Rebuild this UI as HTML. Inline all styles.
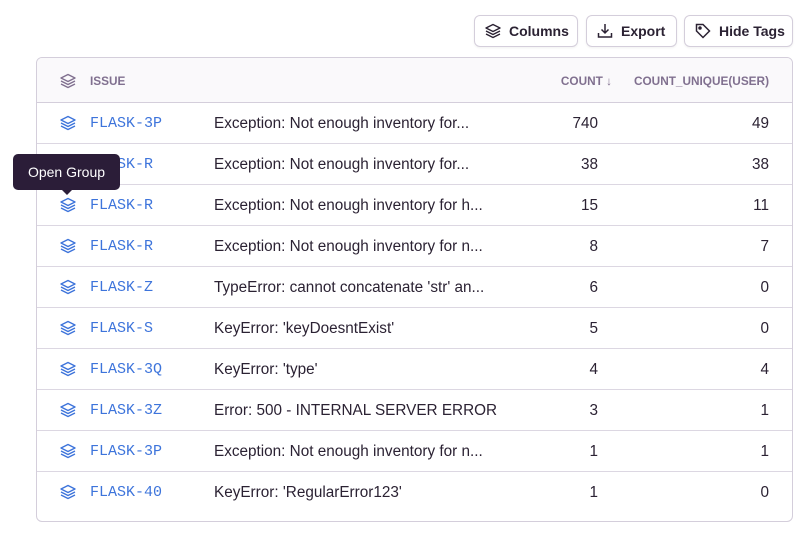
<!DOCTYPE html>
<html><head><style>
*{box-sizing:border-box;margin:0;padding:0}
body{width:807px;height:538px;background:#fff;font-family:"Liberation Sans",sans-serif;color:#2b2233;position:relative;overflow:hidden}
.btn{position:absolute;top:15px;height:32px;border:1px solid #d4cedb;border-radius:6px;font-size:14px;font-weight:bold;color:#2b2233;display:flex;align-items:center;padding-left:10px;box-shadow:0 1px 2px rgba(0,0,0,.06)}
.btn svg{margin-right:8px}
.tbl{position:absolute;left:36px;top:57px;width:757px;height:465px;border:1px solid #d4cedb;border-radius:6px;overflow:hidden}
.hd{height:45px;background:#faf9fb;border-bottom:1px solid #d4cedb;position:relative;font-size:11.8px;font-weight:bold;color:#80708f}
.row{height:41px;border-bottom:1px solid #dcd7e2;position:relative;font-size:15.3px}
.row:last-child{border-bottom:none;height:50px}
.a{position:absolute}
.id{left:53px;top:12px;font-family:"Liberation Mono",monospace;color:#3d74db;font-size:15px}
.t{left:177px;top:12px}
.c{right:194px;top:12px}
.u{right:23px;top:12px}
.ic{left:23px;top:12px}
.tip{position:absolute;left:13px;top:154px;width:107px;height:36px;background:#2b1d38;border-radius:5px;color:#fff;font-size:14px;text-align:center;line-height:36px}
.tip:after{content:"";position:absolute;left:49px;bottom:-5px;border:5px solid transparent;border-top-color:#2b1d38;border-bottom:0}
</style></head><body>
<svg width="0" height="0" style="position:absolute"><defs><g id="st" fill="none" stroke-width="1.4" stroke-linejoin="round"><path d="M8 1.5 L15 5 L8 8.5 L1 5Z"/><path d="M1 8 L8 11.5 L15 8"/><path d="M1 11 L8 14.5 L15 11"/></g></defs></svg>
<div class="btn" style="left:474px;width:104px"><svg width="16" height="16" stroke="#2b2233"><use href="#st"/></svg>Columns</div>
<div class="btn" style="left:586px;width:91px"><svg width="16" height="16" fill="none" stroke="#2b2233" stroke-width="1.5"><path d="M8 1v9M4.5 6.5L8 10l3.5-3.5M1.5 10v4h13v-4"/></svg>Export</div>
<div class="btn" style="left:684px;width:109px"><svg width="16" height="16" fill="none" stroke="#2b2233" stroke-width="1.5"><path d="M1.5 1.5h6.5l6.5 6.5-6.5 6.5-6.5-6.5z"/><circle cx="5" cy="5" r="1" fill="#2b2233"/></svg>Hide Tags</div>
<div class="tbl">
<div class="hd"><svg class="a" style="left:23px;top:15px" width="16" height="16" stroke="#80708f"><use href="#st"/></svg><span class="a" style="left:53px;top:16px">ISSUE</span><span class="a" style="right:180px;top:16px">COUNT ↓</span><span class="a" style="right:23px;top:16px">COUNT_UNIQUE(USER)</span></div>
<div class="row"><svg class="a ic" width="16" height="16" stroke="#3d74db"><use href="#st"/></svg><span class="a id">FLASK-3P</span><span class="a t">Exception: Not enough inventory for...</span><span class="a c">740</span><span class="a u">49</span></div>
<div class="row"><svg class="a ic" width="16" height="16" stroke="#3d74db"><use href="#st"/></svg><span class="a id">FLASK-R</span><span class="a t">Exception: Not enough inventory for...</span><span class="a c">38</span><span class="a u">38</span></div>
<div class="row"><svg class="a ic" width="16" height="16" stroke="#3d74db"><use href="#st"/></svg><span class="a id">FLASK-R</span><span class="a t">Exception: Not enough inventory for h...</span><span class="a c">15</span><span class="a u">11</span></div>
<div class="row"><svg class="a ic" width="16" height="16" stroke="#3d74db"><use href="#st"/></svg><span class="a id">FLASK-R</span><span class="a t">Exception: Not enough inventory for n...</span><span class="a c">8</span><span class="a u">7</span></div>
<div class="row"><svg class="a ic" width="16" height="16" stroke="#3d74db"><use href="#st"/></svg><span class="a id">FLASK-Z</span><span class="a t">TypeError: cannot concatenate 'str' an...</span><span class="a c">6</span><span class="a u">0</span></div>
<div class="row"><svg class="a ic" width="16" height="16" stroke="#3d74db"><use href="#st"/></svg><span class="a id">FLASK-S</span><span class="a t">KeyError: 'keyDoesntExist'</span><span class="a c">5</span><span class="a u">0</span></div>
<div class="row"><svg class="a ic" width="16" height="16" stroke="#3d74db"><use href="#st"/></svg><span class="a id">FLASK-3Q</span><span class="a t">KeyError: 'type'</span><span class="a c">4</span><span class="a u">4</span></div>
<div class="row"><svg class="a ic" width="16" height="16" stroke="#3d74db"><use href="#st"/></svg><span class="a id">FLASK-3Z</span><span class="a t">Error: 500 - INTERNAL SERVER ERROR</span><span class="a c">3</span><span class="a u">1</span></div>
<div class="row"><svg class="a ic" width="16" height="16" stroke="#3d74db"><use href="#st"/></svg><span class="a id">FLASK-3P</span><span class="a t">Exception: Not enough inventory for n...</span><span class="a c">1</span><span class="a u">1</span></div>
<div class="row"><svg class="a ic" width="16" height="16" stroke="#3d74db"><use href="#st"/></svg><span class="a id">FLASK-40</span><span class="a t">KeyError: 'RegularError123'</span><span class="a c">1</span><span class="a u">0</span></div>
</div>
<div class="tip">Open Group</div>
</body></html>
